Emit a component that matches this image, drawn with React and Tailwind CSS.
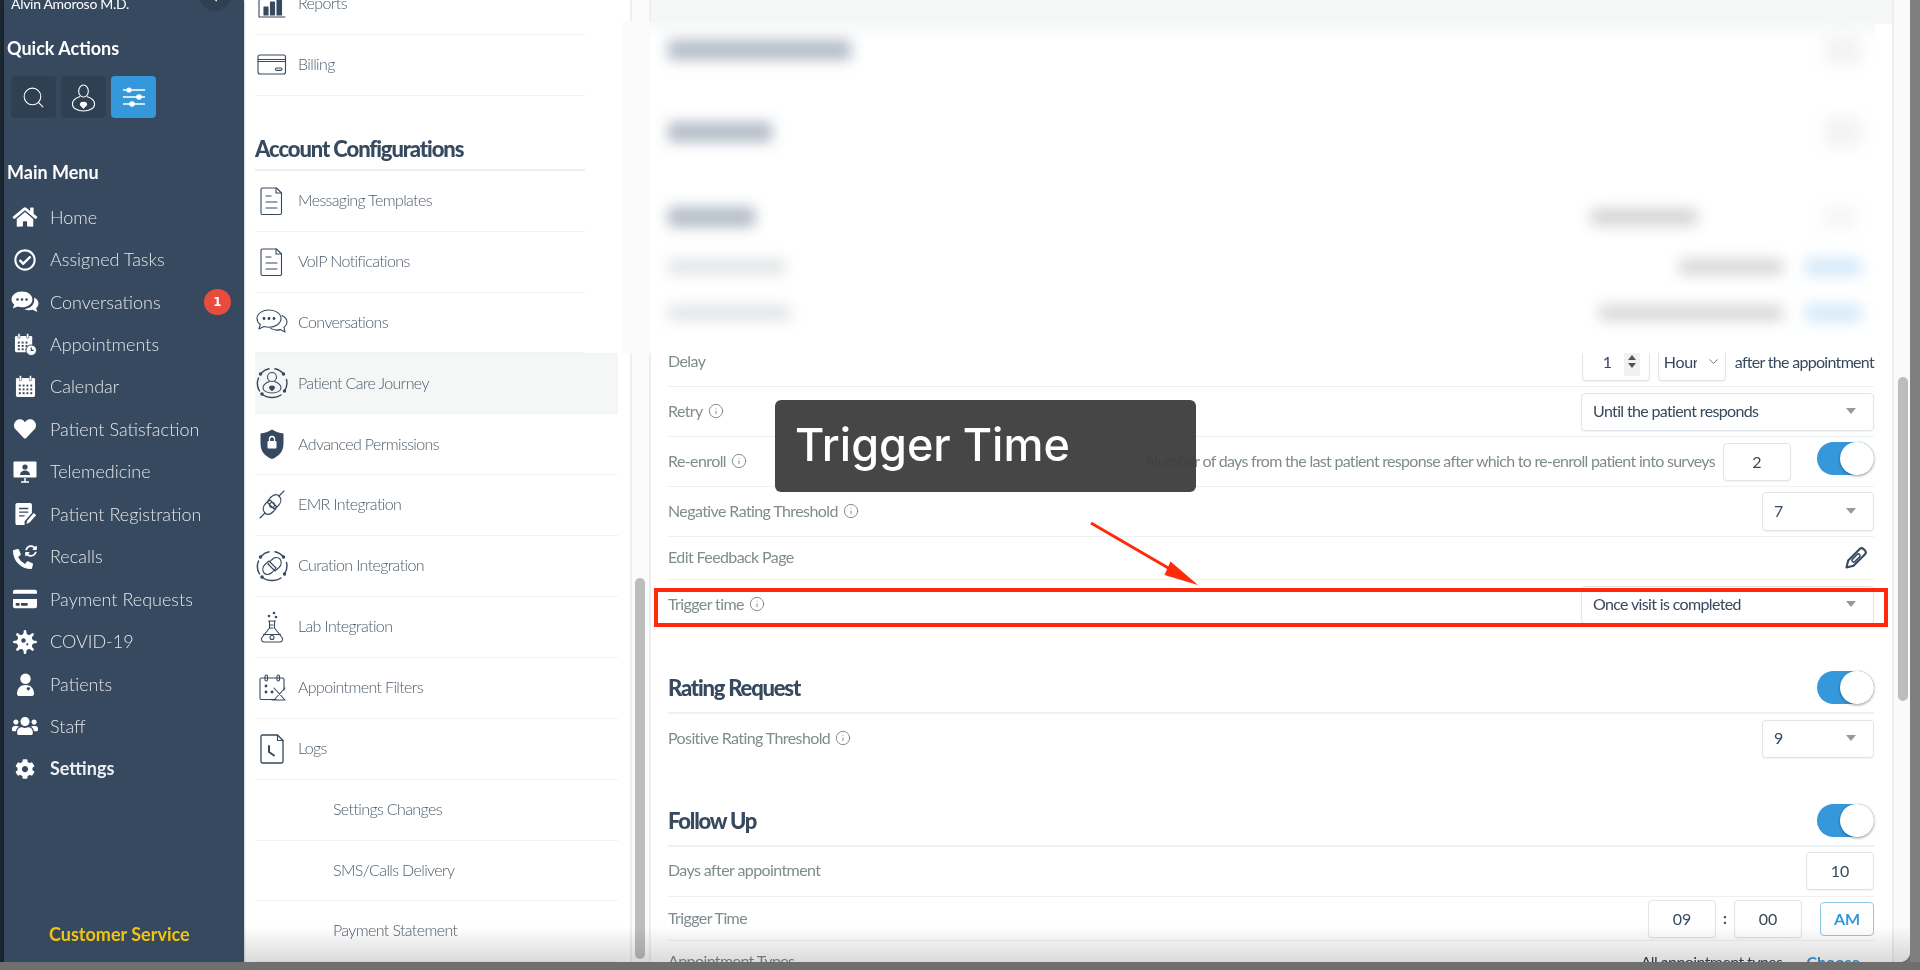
import React from "react";
import { FaHome, FaRegCheckCircle, FaHeart, FaCreditCard, FaUsers, FaCog, FaPhoneAlt, FaSyncAlt, FaVirus, FaChevronLeft } from "react-icons/fa";
import { Search, ChevronDown, Info } from "lucide-react";

const W = "#ffffff";
const D = "#36495e";

const IconConv = () => (
  <svg viewBox="0 0 28 24" className="w-[28px] h-[24px]">
    <path fill={W} d="M11 1.500C5.200 1.500.6 5 .6 9.400c0 2 1 3.800 2.600 5.200L1.800 18.400l4.800-1.800c1.400.5 2.900.7 4.400.7 5.800 0 10.400-3.500 10.400-7.900S16.800 1.500 11 1.500z" />
    <circle cx="6.500" cy="9.500" r="1.300" fill={D} /><circle cx="11" cy="9.500" r="1.300" fill={D} /><circle cx="15.500" cy="9.500" r="1.300" fill={D} />
    <path fill={W} d="M23.200 7.500c2.700 1.300 4.300 3.500 4.300 5.900 0 1.800-.9 3.400-2.400 4.600l1.200 4-4.700-2.200c-1 .3-2.100.4-3.200.4-2 0-3.700-.5-5.100-1.300 5.800-.2 10.800-3.800 9.900-11.400z" />
  </svg>
);
const IconAppt = () => (
  <svg viewBox="0 0 24 24" className="w-[23px] h-[23px]">
    <rect x="1" y="3" width="18" height="17" rx="1.500" fill={W} />
    <rect x="4" y="0.500" width="2.400" height="5" rx="1" fill={W} stroke={D} strokeWidth=".6" /><rect x="13" y="0.500" width="2.400" height="5" rx="1" fill={W} stroke={D} strokeWidth=".6" />
    {[4, 8, 12].map((x) => [9, 12.500, 16].map((y) => <rect key={x + "-" + y} x={x} y={y} width="2" height="2" fill={D} />))}
    <circle cx="18" cy="18" r="5.500" fill={W} stroke={D} strokeWidth="1" />
    <path d="M18 15v3.200h2.600" fill="none" stroke={D} strokeWidth="1.200" />
  </svg>
);
const IconCal = () => (
  <svg viewBox="0 0 22 24" className="w-[21px] h-[23px]">
    <rect x="1" y="3" width="20" height="20" rx="1.500" fill={W} />
    <rect x="4.500" y="0.500" width="2.400" height="5.500" rx="1" fill={W} stroke={D} strokeWidth=".6" /><rect x="15" y="0.500" width="2.400" height="5.500" rx="1" fill={W} stroke={D} strokeWidth=".6" />
    {[4, 8, 12, 16].map((x) => [10, 14, 18].map((y) => <rect key={x + "-" + y} x={x} y={y} width="2" height="2" fill={D} />))}
  </svg>
);
const IconTele = () => (
  <svg viewBox="0 0 24 22" className="w-[24px] h-[22px]">
    <rect x="0.500" y="0.500" width="23" height="16" rx="1" fill={W} />
    <path d="M8 21h8M12 17v4" stroke={W} strokeWidth="1.500" />
    <circle cx="12" cy="6" r="2.600" fill={D} />
    <path d="M7 14c0-3 2.200-4.500 5-4.500s5 1.500 5 4.500z" fill={D} />
  </svg>
);
const IconReg = () => (
  <svg viewBox="0 0 22 24" className="w-[21px] h-[22px]">
    <path d="M2 0h14a2 2 0 0 1 2 2v9l-8 9v4H2a2 2 0 0 1-2-2V2a2 2 0 0 1 2-2z" fill={W} />
    <path d="M4 6h10M4 10h10M4 14h6" stroke={D} strokeWidth="1.500" />
    <path d="M12 23l1-4 7-8 2.500 2.200-7 8z" fill={W} />
  </svg>
);
const IconRecall = () => (
  <span className="relative block w-[24px] h-[24px]">
    <FaPhoneAlt className="absolute left-0 bottom-0 text-white w-[20px] h-[20px]" />
    <FaSyncAlt className="absolute right-0 top-0 text-white w-[12px] h-[12px]" />
  </span>
);
const IconPatient = () => (
  <svg viewBox="0 0 20 24" className="w-[19px] h-[23px]">
    <circle cx="10" cy="6" r="5.500" fill={W} />
    <path d="M1 22c0-6 3.500-9.500 9-9.500s9 3.500 9 9.500c0 1-1 2-2 2H3c-1 0-2-1-2-2z" fill={W} />
    <path d="M13 18.500l-1.800-1.800a1.200 1.200 0 0 1 1.800-1.500 1.200 1.200 0 0 1 1.800 1.500z" fill={D} />
  </svg>
);

const MENU = [
  ["Home", <FaHome className="w-[26px] h-[22px] text-white" />],
  ["Assigned Tasks", <FaRegCheckCircle className="w-[22px] h-[22px] text-white" />],
  ["Conversations", <IconConv />],
  ["Appointments", <IconAppt />],
  ["Calendar", <IconCal />],
  ["Patient Satisfaction", <FaHeart className="w-[24px] h-[22px] text-white" />],
  ["Telemedicine", <IconTele />],
  ["Patient Registration", <IconReg />],
  ["Recalls", <IconRecall />],
  ["Payment Requests", <FaCreditCard className="w-[24px] h-[22px] text-white" />],
  ["COVID-19", <FaVirus className="w-[24px] h-[24px] text-white" />],
  ["Patients", <IconPatient />],
  ["Staff", <FaUsers className="w-[26px] h-[22px] text-white" />],
  ["Settings", <FaCog className="w-[20px] h-[20px] text-white" />],
];

const Line = ({ children, size = 34, vb = "0 0 34 34" }) => (
  <svg viewBox={vb} width={size} height={size} fill="none" stroke={D} strokeWidth="1.100" strokeLinecap="round" strokeLinejoin="round">{children}</svg>
);
const Doc = () => (
  <Line><path d="M7.500 4h14l5 5v20a1.500 1.500 0 0 1-1.500 1.500H7.500A1.500 1.500 0 0 1 6 29V5.500A1.500 1.500 0 0 1 7.500 4z" /><path d="M21 4v5h5.500M11 12h5M11 18h11M11 24h11" /></Line>
);
const Orbit = () => (
  <>
    <path d="M6 7.500A14.500 14.500 0 0 1 14 2.800M20 2.800A14.500 14.500 0 0 1 28.500 8M31.500 13.500a14.500 14.500 0 0 1-2 11.500M26 29a14.500 14.500 0 0 1-9 2.500A14.500 14.500 0 0 1 8 29M4.500 25A14.500 14.500 0 0 1 3.500 12" strokeWidth="1.400" />
    <circle cx="5.500" cy="8" r="1.200" fill={D} /><circle cx="28.500" cy="8" r="1.200" fill={D} /><circle cx="29.500" cy="25" r="1.200" fill={D} /><circle cx="7" cy="28" r="1.200" fill={D} />
  </>
);
const NAV_ICONS = {
  reports: <Line><path d="M4 4v26h26" /><path d="M9 20h4v8H9zM15.500 15h4v13h-4zM22 9h4.500v19H22z" fill={D} /></Line>,
  billing: <Line size={30} vb="0 0 30 30"><rect x="1" y="5" width="27.500" height="19" rx="2" /><path d="M1 9.500h27.500M1 11.500h27.500" /><rect x="18.500" y="18" width="6.500" height="2.400" rx="1.200" /></Line>,
  doc: <Doc />,
  conv: <Line><path d="M14 4C7.500 4 2 7.500 2 12.500c0 2.500 1.300 4.500 3.300 6L4 23l5-2.500c1.500.4 3.300.7 5 .7 6.500 0 12-3.800 12-8.700S20.500 4 14 4z" /><path d="M27 9.500c3 1.500 5 3.800 5 6.500 0 2-1.200 3.900-3 5.300L30 26l-4.700-2.400c-3 .8-7 .5-9.800-1.500" /><circle cx="9" cy="12.500" r=".9" fill={D} /><circle cx="14" cy="12.500" r=".9" fill={D} /><circle cx="19" cy="12.500" r=".9" fill={D} /></Line>,
  care: <Line><Orbit /><circle cx="17" cy="11" r="4.500" /><path d="M14.500 15.500c-3 1-6.500 3-6.500 6.500 0 3 4 5 9 5s9-2 9-5c0-3.500-3.500-5.500-6.500-6.500" /><path d="M17 24.500l-2.200-2.200a1.400 1.400 0 0 1 2.200-1.700 1.400 1.400 0 0 1 2.200 1.700z" fill={D} /></Line>,
  shield: <svg viewBox="0 0 34 34" width="34" height="34"><path d="M17 2.500c3.500 2.500 7.500 3.500 11.500 4v10c0 8-4.500 12.800-11.500 15.500C10 29.300 5.500 24.500 5.500 16.500v-10c4-.5 8-1.500 11.500-4z" fill={D} /><rect x="12.500" y="14" width="9" height="7.500" rx="1" fill={W} /><path d="M14.500 14v-2a2.500 2.500 0 0 1 5 0v2" fill="none" stroke={W} strokeWidth="1.300" /></svg>,
  emr: <Line><path d="M5 30l5-5M29 3l-5 5" /><path d="M10 25c-3-3-2-7 1-10l4-3 7 7-3 4c-3 3-6 5-9 2zM24 8c3 3 2 7-1 10l-4 3-7-7 3-4c3-3 6-5 9-2z" /><circle cx="17" cy="17" r="2.500" /></Line>,
  cur: <Line><Orbit /><path d="M9 24c-2-3-1.500-6 1-8.500l4-3.500 7 7-3.500 4c-2.500 2.500-6 3.500-8.500 1zM25 10c2 3 1.500 6-1 8.500l-4 3.500-7-7 3.500-4c2.500-2.500 6-3.500 8.500-1z" /></Line>,
  lab: <Line><path d="M13.500 11h7M14.500 11v7L7 27.500C5.500 30 7 32 9.500 32h15c2.500 0 4-2 2.500-4.500L19.500 18v-7" /><path d="M8.500 24.500h17" /><circle cx="17" cy="27.500" r="2" /><path d="M15 15h3M15 18h3" /><circle cx="14" cy="6" r=".8" fill={D} /><circle cx="19" cy="3" r=".8" fill={D} /><circle cx="21" cy="7" r=".8" fill={D} /></Line>,
  filt: <Line><path d="M29 19V8.500a1.500 1.500 0 0 0-1.500-1.500H6.500A1.500 1.500 0 0 0 5 8.500V27a1.500 1.500 0 0 0 1.500 1.500H21" /><rect x="10" y="4" width="2.500" height="6" rx="1.200" /><rect x="22" y="4" width="2.500" height="6" rx="1.200" /><path d="M19 17l11 12M30 17L19 29M17 29h13" /><circle cx="11" cy="15" r=".9" fill={D} /><circle cx="11" cy="21" r=".9" fill={D} /><circle cx="17" cy="21" r=".9" fill={D} /></Line>,
  logs: <Line><path d="M7.500 3h15l5.500 5.500v21a1.500 1.500 0 0 1-1.500 1.500H7.500A1.500 1.500 0 0 1 6 29.500v-25A1.500 1.500 0 0 1 7.500 3z" strokeWidth="1.300" /><path d="M22.500 3v5.500H28" /><path d="M14 14v6l5 3.500" strokeWidth="2" /></Line>,
};

const NavRow = ({ icon, label, active, sub }) => (
  <div className={"h-[60.9px] shrink-0 flex items-center border-b border-[#f1f3f3] text-[16px] font-light tracking-[-0.62px] text-[#4c5c6b] " + (active ? "bg-[#f5f7f7]" : "")}>
    {sub ? <span className="ml-[78px] -mt-[2px]">{label}</span> : (
      <>
        <span className="w-[34px] h-[34px] flex items-center justify-center">{NAV_ICONS[icon]}</span>
        <span className="ml-[9px] -mt-[1.5px]">{label}</span>
      </>
    )}
  </div>
);

const Field = ({ className = "", children }) => (
  <div className={"h-[38px] border border-[#e1e5e8] rounded-[4px] bg-white flex items-center text-[16px] text-[#36495e] shadow-[0_1px_1px_rgba(0,0,0,0.05)] " + className}>{children}</div>
);
const Sel = ({ className = "", children }) => (
  <Field className={"justify-between pl-[11px] pr-[17px] tracking-[-0.65px] " + className}>
    <span className="-mt-[2px]">{children}</span>
    <span className="w-0 h-0 border-l-[5px] border-r-[5px] border-t-[6px] border-l-transparent border-r-transparent border-t-[#999999] -mt-[2px]" />
  </Field>
);
const Toggle = () => (
  <div className="w-[57px] h-[33px] rounded-full bg-[#3498db] flex justify-end shrink-0">
    <div className="w-[34px] h-[33px] rounded-full bg-white shadow-[0_1px_3px_rgba(0,0,0,0.4)]" />
  </div>
);
const Label = ({ children, info }) => (
  <span className="flex items-center -mt-[2px] text-[16px] tracking-[-0.6px] text-[#7f8c8d]">
    {children}
    {info && <Info className="ml-[5px] w-[16px] h-[16px] text-[#6f7d7e]" strokeWidth={1.3} />}
  </span>
);
const Row = ({ h, border = true, label, info, children }) => (
  <div className={"flex items-center justify-between shrink-0 " + h + " " + (border ? "border-b border-[#eef1f1]" : "")}>
    <Label info={info}>{label}</Label>
    {children}
  </div>
);
const Heading = ({ children }) => (
  <div className="h-[84px] shrink-0 border-b-2 border-[#eef1f1] flex items-end justify-between pb-[8px]">
    <span className="text-[22px] leading-[33px] font-black tracking-[-1.2px] text-[#36495e]">{children}</span>
    <Toggle />
  </div>
);
const Blur = ({ className }) => <div className={"blur-[7px] " + className} />;

export default function App() {
  return (
    <div className="relative w-[1920px] h-[970px] overflow-hidden bg-[#6f6f6f] font-[Lato,sans-serif]">
      <div className="absolute top-0 right-0 w-[10px] h-[962px] bg-[#7f7f7f]" />
      <div className="relative w-[1910px] h-[962px] flex overflow-hidden rounded-br-[10px] bg-white">
        <div className="w-[4px] bg-[#1b2631] shrink-0" />

        {/* sidebar */}
        <aside className="w-[240px] shrink-0 bg-[#36495e] flex flex-col overflow-hidden shadow-[0_1px_2px_rgba(0,0,0,0.4)]">
          <div className="h-[11px] shrink-0 flex justify-between pl-[7px] pr-[12px]">
            <span className="-mt-[5px] text-[14px] leading-[18px] text-white tracking-[-0.3px]">Alvin Amoroso M.D.</span>
            <span className="-mt-[25px] w-[34px] h-[36px] rounded-full bg-[#2f4052] flex items-end justify-center pb-[9px]">
              <FaChevronLeft className="w-[8px] h-[8px] text-white" />
            </span>
          </div>
          <div className="mt-[25px] h-[24px] leading-[24px] ml-[3px] text-[18px] font-bold text-white">Quick Actions</div>
          <div className="mt-[16px] ml-[7px] flex gap-[5px]">
            <div className="w-[45px] h-[42px] rounded-[4px] bg-[#2f4052] flex items-center justify-center">
              <Search className="w-[25px] h-[25px] text-white" strokeWidth={1} />
            </div>
            <div className="w-[45px] h-[42px] rounded-[4px] bg-[#2f4052] flex items-center justify-center">
              <svg viewBox="0 0 26 30" className="w-[25px] h-[29px]" fill="none" stroke={W} strokeWidth="1.100">
                <path d="M8 8.500a5 6.500 0 1 1 10 0c0 3-2 6-5 6s-5-3-5-6z" />
                <path d="M9.500 14c-5 1.500-8 4-8 8 0 4 5 7 11.500 7s11.500-3 11.500-7c0-4-3-6.500-8-8" />
                <path d="M13 26l-3-3a2 2 0 0 1 3-2.500 2 2 0 0 1 3 2.500z" fill={W} />
              </svg>
            </div>
            <div className="w-[45px] h-[42px] rounded-[4px] bg-[#3498db] flex items-center justify-center">
              <svg viewBox="0 0 24 20" className="w-[24px] h-[20px]" stroke={W} fill={W} strokeWidth="1.300">
                <path d="M1 3h22M1 10h22M1 17h22" />
                <circle cx="7" cy="3" r="2.600" stroke="none" /><circle cx="17" cy="10" r="2.800" stroke="none" /><circle cx="10" cy="17" r="2.800" stroke="none" />
              </svg>
            </div>
          </div>
          <div className="mt-[42px] h-[24px] leading-[24px] ml-[3px] text-[18px] font-bold text-white">Main Menu</div>
          <nav className="mt-[12px] flex flex-col">
            {MENU.map(([label, icon]) => (
              <div key={label} className="h-[42.45px] flex items-center shrink-0">
                <span className="ml-[3px] w-[36px] flex items-center justify-center">{icon}</span>
                <span className={"ml-[7px] text-[18px] " + (label === "Settings" ? "font-bold text-[#eef1f3]" : "font-light text-[#e3e7ea]")}>{label}</span>
                {label === "Conversations" && (
                  <span className="ml-auto mr-[13px] w-[27px] h-[26px] rounded-full bg-[#e74c3c] text-white text-[12px] font-bold flex items-center justify-center font-['DejaVu_Sans',sans-serif]">1</span>
                )}
              </div>
            ))}
          </nav>
          <div className="mt-auto mb-[16px] ml-[45px] h-[24px] leading-[24px] text-[18px] font-bold text-[#f1c40f]">Customer Service</div>
        </aside>

        {/* settings nav */}
        <div className="w-[388px] shrink-0 border-r-2 border-[#eeeeee] pl-[11px] pr-[12px] flex flex-col overflow-hidden">
          <div className="-mt-[26px] flex flex-col">
            <NavRow icon="reports" label="Reports" />
            <NavRow icon="billing" label="Billing" />
            <div className="h-[75px] shrink-0 border-b-2 border-[#eeeeee] flex items-end pb-[8px]">
              <span className="text-[22px] leading-[24px] font-black tracking-[-1.09px] text-[#36495e]">Account Configurations</span>
            </div>
            <NavRow icon="doc" label="Messaging Templates" />
            <NavRow icon="doc" label="VoIP Notifications" />
            <NavRow icon="conv" label="Conversations" />
            <NavRow icon="care" label="Patient Care Journey" active />
            <NavRow icon="shield" label="Advanced Permissions" />
            <NavRow icon="emr" label="EMR Integration" />
            <NavRow icon="cur" label="Curation Integration" />
            <NavRow icon="lab" label="Lab Integration" />
            <NavRow icon="filt" label="Appointment Filters" />
            <NavRow icon="logs" label="Logs" />
            <NavRow sub label="Settings Changes" />
            <NavRow sub label="SMS/Calls Delivery" />
            <NavRow sub label="Payment Statement" />
          </div>
        </div>

        {/* nav scrollbar */}
        <div className="w-[17px] shrink-0 bg-[#fbfbfb] pl-[3px] pt-[578px]">
          <div className="w-[10px] h-[381px] rounded-[5px] bg-[#bdbdbd]" />
        </div>

        {/* content */}
        <main className="flex-1 border-l-2 border-[#eeeeee] flex flex-col overflow-hidden min-w-0">
          <div className="h-[24px] shrink-0 bg-[#f5f7f7]" />
          <div className="pl-[17px] pr-[18px] pt-[313px] flex flex-col">
            <Row h="h-[50px]" label="Delay">
              <div className="flex items-center">
                <Field className="w-[68px] justify-between pl-[20px] pr-[9px]">
                  <span>1</span>
                  <span className="w-[16px] h-[28px] bg-[#f1f1f1] flex flex-col items-center justify-center gap-[3px]">
                    <span className="w-0 h-0 border-l-[4px] border-r-[4px] border-b-[5px] border-l-transparent border-r-transparent border-b-[#555555]" />
                    <span className="w-0 h-0 border-l-[4px] border-r-[4px] border-t-[5px] border-l-transparent border-r-transparent border-t-[#555555]" />
                  </span>
                </Field>
                <Field className="ml-[8px] w-[68px] pl-[5px] pr-[4px] justify-between">
                  <span className="w-[33px] overflow-hidden tracking-[-0.3px]">Hour</span>
                  <ChevronDown className="w-[15px] h-[15px] text-[#555555]" strokeWidth={1.3} />
                </Field>
                <span className="ml-[9px] text-[16px] tracking-[-0.7px] text-[#36495e]">after the appointment</span>
              </div>
            </Row>
            <Row h="h-[50px]" label="Retry" info>
              <Sel className="w-[293px]">Until the patient responds</Sel>
            </Row>
            <Row h="h-[50px]" label="Re-enroll" info>
              <div className="flex items-center">
                <span className="-mt-[2px] text-[16px] tracking-[-0.7px] text-[#7f8c8d]">Number of days from the last patient response after which to re-enroll patient into surveys</span>
                <Field className="ml-[8px] w-[68px] justify-center">2</Field>
                <div className="ml-[26px] -mt-[6px]"><Toggle /></div>
              </div>
            </Row>
            <Row h="h-[50px]" label="Negative Rating Threshold" info>
              <Sel className="w-[112px] h-[39px]">7</Sel>
            </Row>
            <Row h="h-[43px]" label="Edit Feedback Page">
              <svg viewBox="0 0 24 24" className="w-[24px] h-[24px] mr-[6px]" fill="none" stroke={D} strokeWidth="2.100" strokeLinejoin="round" strokeLinecap="round">
                <path d="M15.500 3.200a3 3 0 0 1 4.200 0l1.100 1.100a3 3 0 0 1 0 4.200L9.500 19.800 2.500 21.500 4.200 14.500z" />
                <rect x="7" y="10.300" width="10" height="3.400" rx="1.700" strokeWidth="1.500" transform="rotate(-45 12 12)" />
              </svg>
            </Row>
            <Row h="h-[50px]" border={false} label="Trigger time" info>
              <Sel className="w-[293px]">Once visit is completed</Sel>
            </Row>
            <Heading>Rating Request</Heading>
            <Row h="h-[49px]" border={false} label="Positive Rating Threshold" info>
              <Sel className="w-[112px]">9</Sel>
            </Row>
            <Heading>Follow Up</Heading>
            <Row h="h-[50px] pb-[2px]" label="Days after appointment">
              <Field className="w-[68px] justify-center">10</Field>
            </Row>
            <Row h="h-[44px]" label="Trigger Time">
              <div className="flex items-center">
                <Field className="w-[68px] h-[32px] justify-center">09</Field>
                <span className="w-[18px] text-center text-[15px] font-bold text-[#36495e]">:</span>
                <Field className="w-[68px] h-[32px] justify-center">00</Field>
                <div className="ml-[18px] w-[54px] h-[34px] rounded-[4px] border border-[#8fc6ea] flex items-center justify-center text-[16px] font-bold text-[#3498db]">AM</div>
              </div>
            </Row>
            <Row h="h-[42px]" border={false} label="Appointment Types">
              <div className="flex items-center">
                <span className="text-[16px] tracking-[-0.6px] text-[#36495e]">All appointment types</span>
                <span className="ml-[24px] mr-[14px] text-[16px] font-bold text-[#3498db]">Choose</span>
              </div>
            </Row>
          </div>
        </main>

        {/* window scrollbar */}
        <div className="w-[18px] shrink-0 border-l-2 border-[#eeeeee] bg-[#fafafa] pl-[4px] pt-[377px]">
          <div className="w-[10px] h-[324px] rounded-[5px] bg-[#bdbdbd]" />
        </div>

        {/* blurred privacy panel */}
        <div className="absolute left-[585px] top-[21px] w-[1290px] h-[332px] flex bg-white overflow-hidden">
          <div className="w-[38px] shrink-0 bg-white" />
          <div className="w-[27px] shrink-0 bg-[#fbfbfb]" />
          <div className="flex-1 pl-[18px] pr-[14px] flex flex-col bg-linear-to-b from-[#f6f8f8] via-white via-[6%] to-white">
            <div className="h-[58px] shrink-0 flex items-center justify-between">
              <Blur className="w-[183px] h-[20px] bg-[#b3bcc7]" />
              <Blur className="w-[36px] h-[30px] bg-[#f3f3f3]" />
            </div>
            <div className="mt-[24px] h-[58px] shrink-0 flex items-center justify-between">
              <Blur className="w-[104px] h-[20px] bg-[#b3bcc7]" />
              <Blur className="w-[36px] h-[30px] bg-[#f3f3f3]" />
            </div>
            <div className="mt-[39px] h-[34px] shrink-0 flex items-center justify-between">
              <Blur className="w-[87px] h-[20px] bg-[#b3bcc7]" />
              <div className="flex items-center">
                <Blur className="w-[106px] h-[18px] bg-[#d6d6d6]" />
                <Blur className="ml-[124px] mr-[4px] w-[36px] h-[24px] bg-[#f7f7f7]" />
              </div>
            </div>
            <div className="mt-[16px] h-[34px] shrink-0 flex items-center justify-between">
              <Blur className="w-[117px] h-[16px] bg-[#e2e5e7]" />
              <div className="flex items-center">
                <Blur className="w-[104px] h-[16px] bg-[#d8d8d8]" />
                <Blur className="ml-[22px] w-[56px] h-[18px] bg-[#d5e9f9]" />
              </div>
            </div>
            <div className="mt-[12px] h-[34px] shrink-0 flex items-center justify-between">
              <Blur className="w-[122px] h-[16px] bg-[#e2e5e7]" />
              <div className="flex items-center">
                <Blur className="w-[184px] h-[16px] bg-[#d8d8d8]" />
                <Blur className="ml-[22px] w-[56px] h-[18px] bg-[#d5e9f9]" />
              </div>
            </div>
          </div>
        </div>

        {/* bottom vignette */}
        <div className="absolute left-[244px] right-0 bottom-0 h-[36px] bg-linear-to-b from-transparent to-[#dadada] mix-blend-multiply pointer-events-none" />

        {/* annotation: tooltip */}
        <div className="absolute left-[775px] top-[400px] w-[421px] h-[92px] rounded-[6px] bg-[#3c3c3c]/95 flex items-center pl-[20px] pb-[2px] text-white text-[45px] font-medium font-[Inter,sans-serif]">
          Trigger Time
        </div>

        {/* annotation: red box */}
        <div className="absolute left-[654px] top-[588px] w-[1234px] h-[39px] border-[4px] border-[#ff2a0c] pointer-events-none" />

        {/* annotation: arrow */}
        <svg className="absolute left-[1085px] top-[518px] w-[120px] h-[72px]" viewBox="0 0 120 72">
          <path d="M6 5L85 51" stroke="#ff2a0c" strokeWidth="3" />
          <path d="M113 67L85.500 43.500L79.500 57z" fill="#ff2a0c" />
        </svg>
      </div>
    </div>
  );
}
